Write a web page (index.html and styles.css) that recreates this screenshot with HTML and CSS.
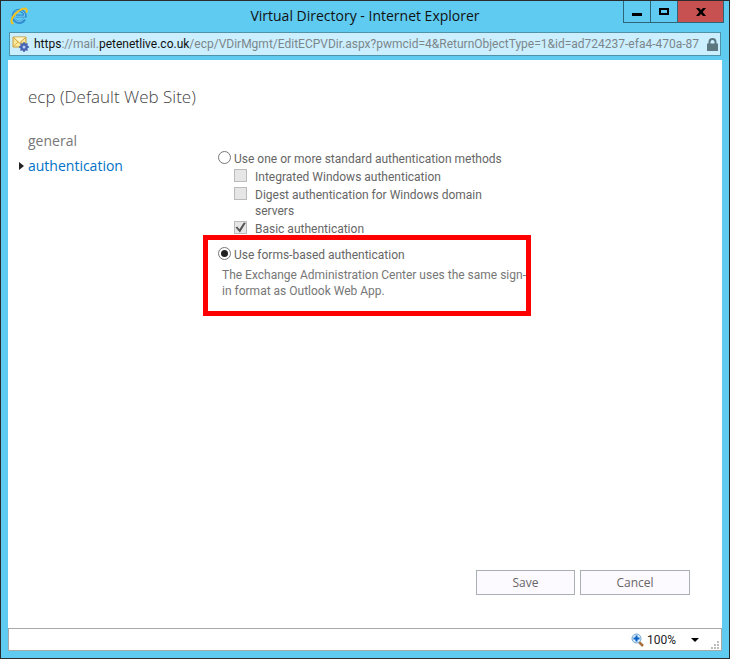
FILE: index.html
```html
<!DOCTYPE html>
<html lang="en">
<head>
    <title>Virtual Directory</title>
    <meta charset="UTF-8">
    <link rel="stylesheet" href="styles.css">
</head>
<body>
    <div class="window">
        <header class="titlebar">
            <svg class="app-icon" viewBox="0 0 18 18" width="18" height="18">
                <path d="M14.5 12.2A6 6 0 1 1 15.2 9H6" fill="none" stroke="#2f8fd0" stroke-width="3.2"/>
                <path d="M14 11.8A5.6 5.6 0 1 1 14.8 9.2H6" fill="none" stroke="#7cc8f2" stroke-width="1"/>
                <path d="M3.6 16.6C0.4 16.4 0.8 11.6 5.4 6.8C9.6 2.2 15 0.4 16.4 2.4C17 3.3 16.8 4.4 16.2 5.6" fill="none" stroke="#f5c21b" stroke-width="2"/>
            </svg>
            <h1 class="title">Virtual Directory - Internet Explorer</h1>
            <div class="caption-buttons">
                <button class="caption-btn" type="button" aria-label="Minimize">
                    <svg viewBox="0 0 12 10" width="12" height="10"><path d="M1 6h10v3H1z"/></svg>
                </button>
                <button class="caption-btn" type="button" aria-label="Maximize">
                    <svg viewBox="0 0 12 10" width="12" height="10"><path d="M2 2h8v5H2z" fill="none" stroke="#000" stroke-width="2"/></svg>
                </button>
                <button class="caption-btn close" type="button" aria-label="Close">
                    <svg viewBox="0 0 12 10" width="12" height="10"><path d="M1 1h3l2 2 2-2h3L7.700 5 11 9H8L6 7 4 9H1l3.300-4z"/></svg>
                </button>
            </div>
        </header>

        <div class="address">
            <svg class="site-icon" viewBox="0 0 18 16" width="18" height="16">
                <path d="M1 1h13v10H1z" fill="#fbe89a" stroke="#c79a35"/>
                <path d="M1.500 10.500L6 6M13.500 10.500L9 6" stroke="#dfb64e"/>
                <path d="M1.500 1.500L7.500 7L13.500 1.500" fill="#fff6c8" stroke="#c79a35"/>
                <circle cx="12" cy="11" r="3.500" fill="#5274c2" stroke="#3f5ba3"/>
                <path d="M12 6v10M7 11h10M8.500 7.500l7 7M15.500 7.500l-7 7" stroke="#4563b0" stroke-width="1.500"/>
                <circle cx="12" cy="11" r="1.500" fill="#b9cdf5"/>
            </svg>
            <div class="url"><b>https</b>://mail.<b>petenetlive.co.uk</b>/ecp/VDirMgmt/EditECPVDir.aspx?pwmcid=4&amp;ReturnObjectType=1&amp;id=ad724237-efa4-470a-87</div>
            <svg class="lock" viewBox="0 0 11 13" width="11" height="13">
                <path d="M2.500 6V4a3 3 0 0 1 6 0v2" fill="none" stroke="#5d7780" stroke-width="2"/>
                <path d="M0 5.500h11V13H0z" fill="#5d7780"/>
            </svg>
        </div>

        <form class="page">
            <h2 class="page-title">ecp (Default Web Site)</h2>
            <div class="columns">
                <nav class="nav">
                    <a class="nav-item" href="#general">general</a>
                    <a class="nav-item selected" href="#authentication">authentication</a>
                </nav>
                <div class="settings">
                    <div class="group">
                        <label class="option"><input class="radio" type="radio" name="auth">Use one or more standard authentication methods</label>
                        <div class="methods">
                            <label class="option method"><input class="check" type="checkbox" disabled>Integrated Windows authentication</label>
                            <label class="option method"><input class="check" type="checkbox" disabled>Digest authentication for Windows domain servers</label>
                            <label class="option method"><input class="check" type="checkbox" checked disabled>Basic authentication</label>
                        </div>
                    </div>
                    <div class="group highlight">
                        <label class="option"><input class="radio" type="radio" name="auth" checked>Use forms-based authentication</label>
                        <p class="note">The Exchange Administration Center uses the same sign-in format as Outlook Web App.</p>
                    </div>
                </div>
            </div>
            <div class="actions">
                <button class="btn" type="submit">Save</button>
                <button class="btn cancel" type="button">Cancel</button>
            </div>
        </form>

        <footer class="statusbar">
            <button class="zoom" type="button">
                <svg viewBox="0 0 13 14" width="13" height="14">
                    <path d="M8 9l4 4" stroke="#a8703c" stroke-width="2.500"/>
                    <circle cx="5.500" cy="5.500" r="4.500" fill="#d9efff" stroke="#6f9fc9"/>
                    <path d="M5.500 2.500v6M2.500 5.500h6" stroke="#0b5fc4" stroke-width="2"/>
                </svg>
                100%
                <svg class="arrow" viewBox="0 0 8 4" width="8" height="4"><path d="M0 0h8L4 4z"/></svg>
            </button>
            <svg class="grip" viewBox="0 0 8 8" width="8" height="8"><path d="M6 0h2v2H6zM3 3h2v2H3zM6 3h2v2H6zM0 6h2v2H0zM3 6h2v2H3zM6 6h2v2H6z" fill="#bdbdbd"/></svg>
        </footer>
    </div>
</body>
</html>
```

FILE: styles.css
```css
* {
    box-sizing: border-box;
}
body {
    margin: 0;
    font-family: "Open Sans", "Noto Sans", sans-serif;
    font-size: 12px;
    line-height: 16px;
    color: #666;
}
button {
    font: inherit;
    color: inherit;
    padding: 0;
}
.window {
    display: flex;
    flex-direction: column;
    min-height: 100vh;
    padding: 0 7px 7px;
    background-color: #5fcbf1;
    border: 1px solid #2b2b2b;
}

/* title bar */
.titlebar {
    display: grid;
    grid-template-columns: 102px 1fr 102px;
    align-items: start;
    height: 31px;
    margin: 0 -2px;
}
.app-icon {
    margin: 6px 0 0 4px;
}
.title {
    margin: 0;
    font-size: 14px;
    font-weight: normal;
    line-height: 30px;
    text-align: center;
    color: #111;
}
.caption-buttons {
    display: flex;
    justify-self: end;
    border: 1px solid #2f6579;
    border-top: 0;
}
.caption-btn {
    display: flex;
    align-items: center;
    justify-content: center;
    width: 27px;
    height: 21px;
    background: none;
    border: 0;
    border-right: 1px solid #2f6579;
}
.caption-btn.close {
    width: 45px;
    background-color: #c75050;
    border-right: 0;
}

/* address bar */
.address {
    display: flex;
    align-items: center;
    gap: 4px;
    height: 24px;
    margin: 0 1px 4px;
    padding: 0 2px;
    background-color: #ccefff;
    border: 1px solid #4f93ab;
}
.site-icon, .lock {
    flex: none;
}
.url {
    flex: 1;
    overflow: hidden;
    white-space: nowrap;
    font-family: Roboto, sans-serif;
    color: #7b868a;
}
.url b {
    font-weight: normal;
    color: #111;
}

/* page */
.page {
    flex: 1;
    display: flex;
    flex-direction: column;
    padding: 25px 32px 33px 20px;
    background-color: #fff;
}
.page-title {
    margin: 0 0 19px;
    font-size: 17px;
    font-weight: 300;
    line-height: 24px;
    color: #444;
}
.columns {
    display: flex;
}
.nav {
    display: flex;
    flex-direction: column;
    width: 175px;
}
.nav-item {
    font-size: 14px;
    line-height: 25px;
    color: #777;
    text-decoration: none;
}
.nav-item.selected {
    display: flex;
    align-items: center;
    gap: 4px;
    margin-left: -9px;
    color: #0072c6;
}
.nav-item.selected::before {
    content: "";
    border: 4px solid transparent;
    border-left: 5px solid #222;
    border-right: 0;
}
.settings {
    width: 328px;
    padding-top: 23px;
    font-family: Roboto, sans-serif;
}
.group {
    padding: 0 15px;
}
.option {
    display: flex;
    align-items: flex-start;
    gap: 3px;
}
.methods {
    display: flex;
    flex-direction: column;
    gap: 2px;
    padding: 2px 16px 0;
}
.method {
    gap: 8px;
}
.radio, .check {
    appearance: none;
    flex: none;
    width: 13px;
    height: 13px;
    margin: 0;
    border: 1px solid #777;
    background-color: #fff;
}
.radio {
    border-radius: 50%;
    padding: 2px;
}
.radio:checked {
    background-color: #222;
    background-clip: content-box;
}
.check {
    border-color: #bbb;
    background-color: #e6e6e6;
}
.check:checked::before {
    content: "";
    display: block;
    height: 11px;
    background-color: #555;
    clip-path: polygon(5% 50%, 20% 40%, 40% 65%, 80% 5%, 98% 10%, 45% 95%);
}
.highlight {
    margin-top: -2px;
    padding: 7px 0 12px 10px;
    border: 5px solid #f00;
}
.note {
    margin: 4px 0 0 4px;
    color: #777;
}
.actions {
    display: flex;
    justify-content: flex-end;
    gap: 5px;
    margin-top: auto;
}
.btn {
    width: 99px;
    height: 25px;
    background-color: #fdfaff;
    border: 1px solid #a9b0b3;
}
.btn.cancel {
    width: 110px;
}

/* status bar */
.statusbar {
    display: flex;
    align-items: center;
    justify-content: flex-end;
    gap: 12px;
    height: 23px;
    padding-right: 2px;
    background-color: #fff;
    border: 1px solid #a8a8a8;
}
.zoom {
    display: flex;
    align-items: center;
    gap: 3px;
    background: none;
    border: 0;
    font-family: Roboto, sans-serif;
    color: #222;
}
.arrow {
    margin-left: 12px;
}
.grip {
    align-self: flex-end;
    margin-bottom: 1px;
}
```
